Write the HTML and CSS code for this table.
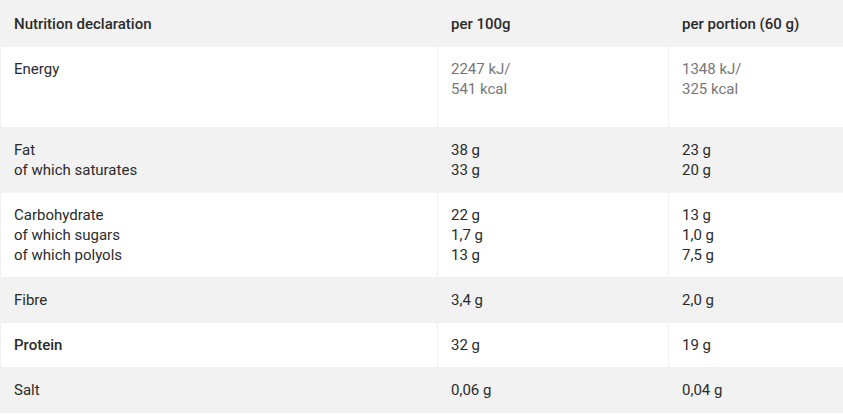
FILE: index.html
```html
<!DOCTYPE html>
<html lang="en">
<head>
<meta charset="utf-8">
<title>Nutrition declaration</title>
<link rel="stylesheet" href="styles.css">
</head>
<body>
<table class="nutrition">
  <colgroup>
    <col class="c1"><col class="c2"><col class="c3">
  </colgroup>
  <thead>
    <tr class="grey">
      <th>Nutrition declaration</th>
      <th>per 100g</th>
      <th>per portion (60 g)</th>
    </tr>
  </thead>
  <tbody>
    <tr class="energy">
      <td>Energy</td>
      <td class="muted">2247 kJ/<br>541 kcal</td>
      <td class="muted">1348 kJ/<br>325 kcal</td>
    </tr>
    <tr class="grey">
      <td>Fat<br>of which saturates</td>
      <td>38 g<br>33 g</td>
      <td>23 g<br>20 g</td>
    </tr>
    <tr>
      <td>Carbohydrate<br>of which sugars<br>of which polyols</td>
      <td>22 g<br>1,7 g<br>13 g</td>
      <td>13 g<br>1,0 g<br>7,5 g</td>
    </tr>
    <tr class="grey">
      <td>Fibre</td>
      <td>3,4 g</td>
      <td>2,0 g</td>
    </tr>
    <tr>
      <td class="strong">Protein</td>
      <td>32 g</td>
      <td>19 g</td>
    </tr>
    <tr class="grey">
      <td>Salt</td>
      <td>0,06 g</td>
      <td>0,04 g</td>
    </tr>
  </tbody>
</table>
</body>
</html>
```
FILE: styles.css
```css
html, body {
  margin: 0;
  padding: 0;
  background: #ffffff;
}
body {
  font-family: Roboto, "Liberation Sans", Arial, sans-serif;
  font-size: 15px;
  line-height: 20px;
  color: #2b2b2b;
}
.nutrition {
  width: 843px;
  border-collapse: collapse;
  table-layout: fixed;
  margin-top: 0;
}
.c1 { width: 437px; }
.c2 { width: 231px; }
.c3 { width: 175px; }
.nutrition th,
.nutrition td {
  text-align: left;
  vertical-align: top;
  padding: 12px 13px 12px 13px;
  border: 1px solid #f1f1f1;
}
.nutrition th {
  font-weight: 500;
  padding-top: 13px;
}
.nutrition tr.grey th,
.nutrition tr.grey td {
  background: #f2f2f2;
  border-color: #f2f2f2;
}
.nutrition thead th {
  border-top-color: #f7f7f7;
  border-right-color: #f7f7f7;
}
.nutrition tr.energy td {
  padding-bottom: 28px;
}
.muted {
  color: #777777;
}
.strong {
  font-weight: 500;
}
```
